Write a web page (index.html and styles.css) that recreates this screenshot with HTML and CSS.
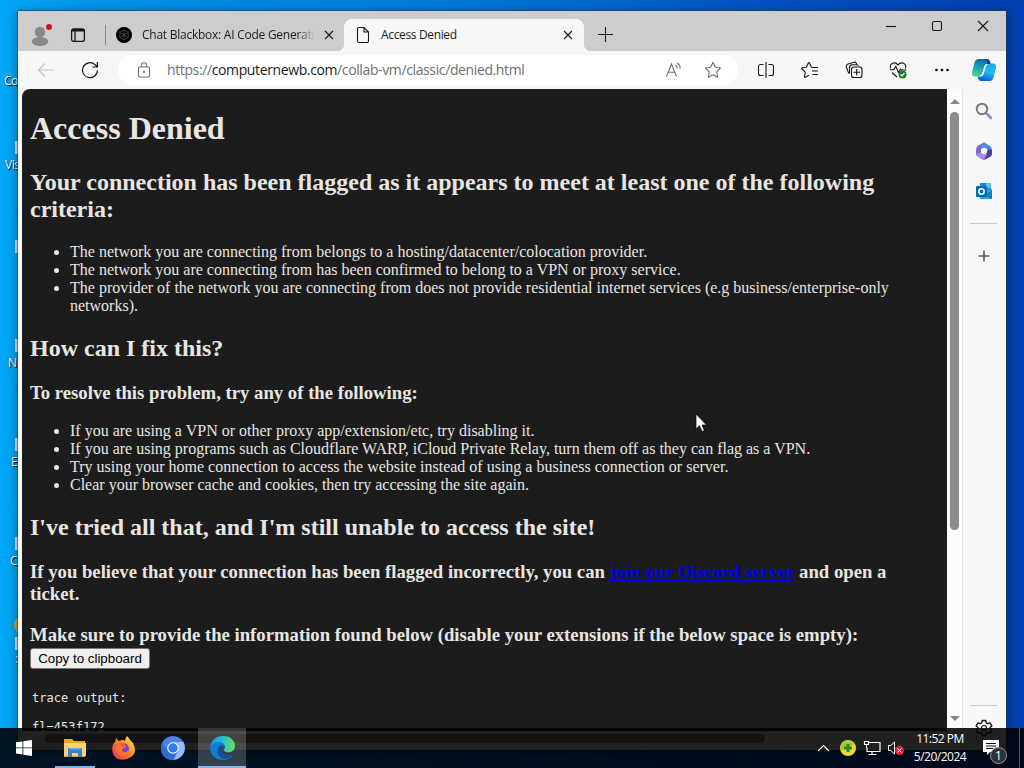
FILE: index.html
```html
<!DOCTYPE html>
<html lang="en">
<head>
<meta charset="utf-8">
<title>Access Denied</title>
<link rel="stylesheet" href="styles.css">
</head>
<body>
<div class="desktop">
  <div class="shortcut s1">Co</div>
  <div class="shortcut s2"><i></i>Vis</div>
  <div class="shortcut s3"><i></i></div>
  <div class="shortcut s4"><i></i>N</div>
  <div class="shortcut s5"><i></i>E</div>
  <div class="shortcut s6"><i></i>C</div>
  <div class="shortcut s7"><b></b><i></i>:</div>

  <main class="window">
    <header class="tabstrip">
      <svg class="avatar" width="24" height="28" viewBox="0 0 24 28"><circle cx="10" cy="11" r="5.2" fill="#888"/><ellipse cx="10" cy="20.5" rx="8.2" ry="4.5" fill="#888"/><circle cx="19" cy="6" r="3" fill="#d4141c"/></svg>
      <svg class="tabmenu line" width="16" height="16" viewBox="0 0 16 16"><rect x="1.6" y="1.8" width="12.8" height="12.5" rx="2" stroke-width="1.300"/><path d="M2 3.300h12" stroke-width="2.400"/><path d="M5 3v11" stroke-width="1.300"/></svg>
      <span class="divider"></span>
      <div class="tab back-tab">
        <svg width="16" height="16" viewBox="0 0 16 16"><circle cx="8" cy="8" r="8"/><path d="M8 3l4.300 2.500v5L8 13l-4.300-2.500v-5zM8 3v10M3.700 5.500l8.600 5M12.300 5.500l-8.600 5" fill="none" stroke="#555" stroke-width=".7"/></svg>
        <span class="tab-title long">Chat Blackbox: AI Code Generati</span>
        <svg class="close line" width="10" height="10" viewBox="0 0 10 10"><path d="M1 1l8 8M9 1l-8 8"/></svg>
      </div>
      <div class="tab active-tab">
        <svg class="line" width="14" height="18" viewBox="0 0 14 18"><path d="M3 1.500h5l4.500 4.500v9a1.500 1.500 0 0 1-1.500 1.500H3A1.500 1.500 0 0 1 1.500 15V3A1.500 1.500 0 0 1 3 1.500zM8 1.500V6h4.500"/></svg>
        <span class="tab-title short">Access Denied</span>
        <svg class="close line" width="10" height="10" viewBox="0 0 10 10"><path d="M1 1l8 8M9 1l-8 8"/></svg>
      </div>
      <svg class="newtab line" width="15" height="15" viewBox="0 0 15 15"><path d="M7.500 0v15M0 7.500h15"/></svg>
      <div class="controls">
        <svg class="line" width="12" height="12" viewBox="0 0 12 12"><path d="M1 6.500h10"/></svg>
        <svg class="line" width="12" height="12" viewBox="0 0 12 12"><rect x="1.500" y="1.500" width="9" height="9" rx="1.500"/></svg>
        <svg class="line" width="12" height="12" viewBox="0 0 12 12"><path d="M1 1l10 10M11 1L1 11"/></svg>
      </div>
    </header>

    <nav class="toolbar">
      <svg class="line back" width="18" height="16" viewBox="0 0 18 16"><path d="M17 8H1.500M8 1.500L1.500 8 8 14.500"/></svg>
      <svg class="line reload" width="18" height="18" viewBox="0 0 18 18"><path d="M16.500 9.500A7.500 7.500 0 1 1 14 3.600L16.300 6M16.400 1v5h-5" stroke-width="1.200"/></svg>
      <div class="address">
        <svg class="line gray" width="14" height="16" viewBox="0 0 14 16"><rect x="1.500" y="5" width="11" height="10" rx="1.500"/><path d="M4.300 5V3.500a2.700 2.700 0 0 1 5.400 0V5"/><circle cx="7" cy="10" r=".6"/></svg>
        <span class="url">https://<em>computernewb.com</em>/collab-vm/classic/denied.html</span>
        <svg class="line gray aloud" width="18" height="16" viewBox="0 0 18 16"><path d="M1.500 14.500L6.500 2l5 12.500M3.200 10.300h6.600M10.500 3a4 4 0 0 1 1.700 3.500M12.300 1A6.500 6.500 0 0 1 15.200 6.500"/></svg>
        <svg class="line gray" width="18" height="18" viewBox="0 0 18 18"><path d="M9 1.300l2.300 4.900 5.300.8-3.800 3.800.9 5.500L9 13.700l-4.700 2.600.9-5.500L1.400 7l5.300-.8z" stroke-linejoin="round"/></svg>
      </div>
      <div class="tools">
        <svg class="line" width="18" height="18" viewBox="0 0 18 18"><path d="M6.500 3.500H3.500a2 2 0 0 0-2 2v7a2 2 0 0 0 2 2h3M11.500 3.500h3a2 2 0 0 1 2 2v7a2 2 0 0 1-2 2h-3M9 1v16"/></svg>
        <svg class="line" width="18" height="18" viewBox="0 0 18 18"><path d="M10.500 6.200L8.500 2Q7.900 1 7.300 2L5.300 6.200 1.300 6.800Q.3 7.100 1 8l3.300 3.200-.8 4.500q0 1 1 .6L8 14.300M10.500 6.500H17M11 10h6M11.500 13.500H17" stroke-linejoin="round"/></svg>
        <svg class="line" width="18" height="18" viewBox="0 0 18 18"><rect x="6.500" y="6" width="10.500" height="10.500" rx="2.300"/><path d="M11.700 8v6.500M8.500 11.200H15M4.500 12.500Q3.600 12 3.200 11L1.200 5.500Q.9 4 2.500 3.300L9 1.200Q10.600.9 11.300 2.300L11.600 3.200M4.500 12.500V6.500Q4.700 4 7 3.700H11.500Q13 3.700 13.500 4.500"/></svg>
        <svg class="line" width="18" height="18" viewBox="0 0 18 18"><path d="M1.700 7.500C-.2 2.500 6-.2 9 4c3-4.200 9.200-1.500 7.300 3.500M.8 8.800h4l2-3.500L9.500 11.500l2-3.300 1 .8h5M3 11.500L8 16"/><circle cx="13.500" cy="13.500" r="4" fill="#247a2e" stroke="none"/><path d="M11.600 13.500l1.400 1.400 2.500-2.800" stroke="#fff"/></svg>
        <svg width="18" height="18" viewBox="0 0 18 18"><circle cx="3.500" cy="9" r="1.300"/><circle cx="9" cy="9" r="1.300"/><circle cx="14.500" cy="9" r="1.300"/></svg>
      </div>
      <svg class="copilot" width="26" height="24" viewBox="0 0 26 24"><defs><linearGradient id="cg" x1=".6" y1="0" x2=".3" y2="1"><stop offset="0" stop-color="#155fa5"/><stop offset=".45" stop-color="#1b9bbd"/><stop offset="1" stop-color="#4ed596"/></linearGradient><linearGradient id="cb" x1=".7" y1="0" x2=".4" y2="1"><stop offset="0" stop-color="#25a9e8"/><stop offset=".5" stop-color="#1dbaf2"/><stop offset="1" stop-color="#0b5fd0"/></linearGradient></defs><path d="M7.500 1H16q2.300 0 3 3l.5 2H16q-2 0-2.700 2.500L11.500 15q-1 3.500-4 3.500H3.800Q.5 18.500 1 14.500L3.500 4.500Q4.500 1 7.500 1z" fill="url(#cg)"/><path d="M18.500 23H10q-2.300 0-3-3l-.5-1.500H9q2.500 0 3.300-2.800L14.500 9q1-3.500 4-3.500h3.700q3.300 0 2.800 4L22.500 19.500Q21.500 23 18.500 23z" fill="url(#cb)"/><path d="M15.500 1H16q2.300 0 3 3l.5 2-3.500-.1z" fill="#12438c"/><path d="M13.300 8.500Q14 6.300 16 6h1.500q-2 .7-2.800 3L12.500 16q-.8 2.300-2.500 2.500H8q2.500-.5 3.500-3.500z" fill="#f4fcff"/></svg>
    </nav>

    <div class="content">
      <div class="viewport">
        <article class="page">
          <h1>Access Denied</h1>
          <h2>Your connection has been flagged as it appears to meet at least one of the following criteria:</h2>
          <ul>
            <li>The network you are connecting from belongs to a hosting/datacenter/colocation provider.</li>
            <li>The network you are connecting from has been confirmed to belong to a VPN or proxy service.</li>
            <li>The provider of the network you are connecting from does not provide residential internet services (e.g business/enterprise-only networks).</li>
          </ul>
          <h2>How can I fix this?</h2>
          <h3>To resolve this problem, try any of the following:</h3>
          <ul>
            <li>If you are using a VPN or other proxy app/extension/etc, try disabling it.</li>
            <li>If you are using programs such as Cloudflare WARP, iCloud Private Relay, turn them off as they can flag as a VPN.</li>
            <li>Try using your home connection to access the website instead of using a business connection or server.</li>
            <li>Clear your browser cache and cookies, then try accessing the site again.</li>
          </ul>
          <h2>I've tried all that, and I'm still unable to access the site!</h2>
          <h3>If you believe that your connection has been flagged incorrectly, you can <a href="#">join our Discord server</a> and open a ticket.</h3>
          <h3 class="provide">Make sure to provide the information found below (disable your extensions if the below space is empty):</h3>
          <button class="copy">Copy to clipboard</button>
          <pre class="trace">trace output:

fl=453f172</pre>
        </article>
        <div class="hscroll"><span></span></div>
      </div>
      <div class="vscroll"><i class="up"></i><span></span><i class="down"></i></div>
      <aside class="sidebar">
        <svg width="18" height="18" viewBox="0 0 18 18"><circle cx="7" cy="7" r="5.300" fill="#eef2f5" stroke="#777" stroke-width="1.900"/><path d="M11 11l2 2" stroke="#777" stroke-width="2"/><path d="M12.800 12.800l3 3" stroke="#a583cb" stroke-width="3" stroke-linecap="round"/></svg>
        <svg width="18" height="18" viewBox="0 0 18 18"><path d="M9 .5L3 3.500Q1 5 1 8v5l5-2V7l6-4.500z" fill="#7d6bd0"/><path d="M9 .5l6 3.500q2 1 2 4v3l-5-4-5-.5-1 .5 1-4z" fill="#4a8ee0"/><path d="M17 8v4q0 2-2 3l-6 3-4-2 6-4 2-5z" fill="#503c9c"/><path d="M1 12l5-1.500 6 1.500-3 6-6-3q-2-1-2-3z" fill="#a68ae0"/><path d="M9 5.500l3 1.700v3.500l-3 1.700-3-1.700V7.200z" fill="#fff"/></svg>
        <svg width="18" height="18" viewBox="0 0 18 18"><rect x="5" y="1" width="11" height="10" fill="#168bd7"/><path d="M11 1h5v5h-5z" fill="#49c8f2"/><path d="M4 9l13-2v9q0 1-1 1H5z" fill="#27a5e7"/><path d="M17 8v8q0 1-1 1l-6-4z" fill="#147bc5"/><rect x="1" y="4" width="11" height="11" rx="1" fill="#0868b8"/><circle cx="6.500" cy="9.500" r="2.700" fill="none" stroke="#fff" stroke-width="1.500"/></svg>
        <hr>
        <svg class="line plus" width="12" height="12" viewBox="0 0 12 12"><path d="M6 .5v11M.5 6h11"/></svg>
        <hr class="low">
        <svg class="line gear" width="18" height="18" viewBox="0 0 18 18"><path d="M7.300 1.500h3.400l.6 2.300 1.500.8 2.300-.7 1.700 3-1.700 1.600v1l1.700 1.600-1.700 3-2.300-.7-1.500.8-.6 2.300H7.300l-.6-2.300-1.500-.8-2.300.7-1.700-3 1.700-1.600v-1L1.200 6.900l1.700-3 2.300.7 1.500-.8z" stroke-width="1.400" stroke-linejoin="round"/><circle cx="9" cy="9" r="2.500"/></svg>
      </aside>
    </div>
  </main>

  <svg class="cursor" width="13" height="20" viewBox="0 0 13 20"><path d="M1 1v15l3.500-3.300L7 18.500l2.300-1L7 12h4.500z" fill="#fff" stroke="#000" stroke-width=".7"/></svg>

  <footer class="taskbar">
    <div class="app"><svg width="16" height="16" viewBox="0 0 16 16" fill="#fff"><path d="M0 2.300L6.500 1.400v6.100H0zM7.300 1.300L16 0v7.500H7.300zM0 8.300h6.500v6.200L0 13.600zM7.300 8.300H16V16l-8.700-1.300z"/></svg></div>
    <div class="app open"><svg width="22" height="20" viewBox="0 0 22 20"><path d="M0 1h8l2 2h11v16H0z" fill="#e5a629"/><path d="M0 5h22v13H0z" fill="#f8d56c"/><path d="M4 10h14v9h-4v-4H8v4H4z" fill="#3284c4"/><path d="M5 10h12v1.500H5z" fill="#58b7ed"/></svg></div>
    <div class="app"><svg width="24" height="24" viewBox="0 0 24 24"><defs><linearGradient id="fx" x1="1" y1="0" x2="0" y2="1"><stop offset="0" stop-color="#fff44a"/><stop offset=".45" stop-color="#ff8b20"/><stop offset="1" stop-color="#f32460"/></linearGradient></defs><path d="M15 0c2 2 3 4 4 5l2 2q6 12-6 16Q3 26 .5 16-.5 9 3 6l1-4 3 3 3-1q2 0 3 1 0-3 2-5z" fill="url(#fx)"/><circle cx="12" cy="12.500" r="5" fill="#7843cf"/><path d="M4 8l7 1q3 0 3 2-4 1-4 4 3 3 7-1-1 6-7 6Q5 19 4 14z" fill="#ff7433"/><path d="M8 7h4l2 3-4 1z" fill="#ff5a40"/></svg></div>
    <div class="app"><svg width="24" height="24" viewBox="0 0 24 24"><circle cx="12" cy="12" r="12" fill="#4a82ec"/><path d="M1 7l6 8q5 5 10-2l-5 11Q3 24 .5 16q-1-5 .5-9z" fill="#326bd0"/><path d="M12 6h10.500q5 13-9.500 18l4-9q2-5-5-9z" fill="#9dbbf7"/><circle cx="12" cy="12" r="5.800" fill="#fff"/><circle cx="12" cy="12" r="4.700" fill="#337be5"/></svg></div>
    <div class="app open current"><svg width="25" height="24" viewBox="0 0 25 24"><defs><linearGradient id="eg" x2="1"><stop stop-color="#1495d8"/><stop offset=".5" stop-color="#25bfd0"/><stop offset="1" stop-color="#71df54"/></linearGradient></defs><path d="M0 12C1 3 7 0 13 0c8 0 12 5 12 10 0 6-7 8-11 5-1-1 1-2 1-4 0-4-10-6-15 1z" fill="url(#eg)"/><path d="M0 12C3 5 13 4 15 10 8 8 5 18 13 21q5 2 10-2-3 5-10 5Q1 23 0 12z" fill="#127bd0"/><path d="M13 9c-7 0-8 12 1 14 4 0 7-2 9-5-8 3-13-1-10-9z" fill="#174f9d"/></svg></div>
    <div class="tray">
      <svg class="chev" width="13" height="8" viewBox="0 0 13 8"><path d="M1 7l5.500-5.500L12 7"/></svg>
      <svg width="16" height="16" viewBox="0 0 16 16"><circle cx="8" cy="8" r="8" fill="#e8dc3c"/><path d="M1 4Q8-3 14 4L1 11z" fill="#9ccd38"/><path d="M8 4v8M4 8h8" stroke="#2b8b20" stroke-width="3"/></svg>
      <svg class="net" width="18" height="16" viewBox="0 0 18 16"><path d="M5.500 2.500H17v9H4v-4M9 12v2.500M5.500 14.500h8M1.500 1.500h4v3h-4zM3.500 5v3"/></svg>
      <svg class="speaker" width="18" height="16" viewBox="0 0 18 16"><path d="M1.500 5.500h2.300L7.500 2v12l-3.700-3.500H1.500z" fill="none" stroke="#fff"/><circle cx="12.500" cy="10.500" r="4.500" fill="#d82b32"/><path d="M10.500 8.500l4 4M14.500 8.500l-4 4" stroke="#fff"/></svg>
      <div class="clock"><span>11:52 PM</span><span>5/20/2024</span></div>
      <div class="notice"><svg width="16" height="16" viewBox="0 0 16 16"><path d="M0 0h16v12H7l-3 3v-3H0z" fill="#fff"/><path d="M3 3.500h10M3 6h10M3 8.500h7" stroke="#111"/></svg><b>1</b></div>
      <span class="peek"></span>
    </div>
  </footer>
</div>
</body>
</html>
```
FILE: styles.css
```css
* { box-sizing: border-box; }
body { margin: 0; font-family: "Open Sans", "Noto Sans", sans-serif; }
svg { display: block; flex: none; }
.line { fill: none; stroke: #171717; stroke-width: 1.1; }
.gray { stroke: #707070; }

.desktop { position: relative; width: 1024px; height: 768px; overflow: hidden; background: linear-gradient(90deg, #00a6f7 0, #0093e7 10%, #0078d7 45%, #0052c0 75%, #003faf 100%); }
.shortcut { position: absolute; left: 0; width: 18px; height: 34px; overflow: hidden; font-size: 12px; line-height: 16px; color: #fff; text-shadow: 1px 1px 1px #000; white-space: nowrap; letter-spacing: -.5px; }
.shortcut i { position: absolute; left: 15px; top: 0; width: 3px; height: 13px; background: #d5e4ef; }
.s1 { top: 73px; padding-left: 4px; }
.s2 { top: 141px; padding: 16px 0 0 5px; }
.s3 { top: 240px; }
.s4 { top: 339px; padding: 16px 0 0 8px; }
.s5 { top: 438px; padding: 16px 0 0 11px; }
.s6 { top: 537px; padding: 16px 0 0 10px; }
.s7 { top: 615px; height: 52px; padding: 36px 0 0 15px; }
.s7 i { top: 22px; }
.s7 b { position: absolute; left: 14px; top: 0; width: 20px; height: 20px; border-radius: 50%; background: #c8a842; }

.window { position: absolute; left: 18px; top: 11px; width: 988px; height: 739px; display: flex; flex-direction: column; background: #f7f7f7; box-shadow: 0 0 0 1px rgba(40, 60, 80, .55), 0 2px 10px rgba(0, 0, 0, .45); }
.tabstrip { height: 40px; flex: none; display: flex; align-items: center; background: #cdcdcd; }
.avatar { margin: 8px 0 0 12px; }
.tabmenu { margin: 8px 0 0 16px; }
.divider { width: 1px; height: 20px; margin: 8px 0 0 19px; background: #888; }
.tab { display: flex; align-items: center; font-size: 12px; color: #1b1b1b; }
.back-tab { width: 238px; height: 32px; margin-top: 8px; padding-left: 10px; }
.tab-title { flex: none; white-space: nowrap; overflow: hidden; line-height: 18px; }
.long { width: 173px; margin-left: 10px; letter-spacing: -.25px; -webkit-mask-image: linear-gradient(90deg, #000 90%, transparent); mask-image: linear-gradient(90deg, #000 90%, transparent); }
.back-tab .close { margin-left: 9px; }
.active-tab { position: relative; width: 240px; height: 32px; margin-top: 8px; padding: 0 11px 0 12px; border-radius: 8px 8px 0 0; background: #f7f7f7; }
.active-tab::before, .active-tab::after { content: ""; position: absolute; bottom: 0; width: 7px; height: 7px; }
.active-tab::before { left: -7px; background: radial-gradient(circle at 0 0, transparent 7px, #f7f7f7 7.5px); }
.active-tab::after { right: -7px; background: radial-gradient(circle at 100% 0, transparent 7px, #f7f7f7 7.5px); }
.short { margin: 0 auto 0 11px; letter-spacing: -.35px; }
.newtab { margin: 7px 0 0 14px; }
.controls { display: flex; gap: 34px; margin: 0 17px 10px auto; }

.toolbar { height: 38px; flex: none; display: flex; align-items: center; }
.back { margin-left: 19px; stroke: #c5c5c5; }
.reload { margin-left: 26px; }
.address { width: 620px; height: 30px; margin-left: 19px; padding: 0 16px 0 19px; display: flex; align-items: center; border-radius: 15px; background: #fff; }
.url { margin-left: 16px; font-size: 14px; line-height: 20px; letter-spacing: -.38px; white-space: nowrap; color: #707070; }
.url em { font-style: normal; color: #1b1b1b; }
.aloud { margin: 0 21px 0 auto; }
.tools { display: flex; gap: 26px; margin-left: 19px; }
.copilot { margin: 0 9px 0 auto; }

.content { flex: 1; min-height: 0; display: flex; padding-left: 4px; }
.viewport { width: 925px; display: flex; flex-direction: column; }
.page { height: 642px; flex: none; overflow: hidden; padding: 0 8px; border-radius: 8px 0 0 0; background: #1c1c1c; color: #e8e6e3; font-family: "Liberation Serif", serif; font-size: 16px; line-height: normal; }
.page h1 { margin: 21.44px 0; font-size: 32px; }
.page h2 { margin: 19.92px 0; font-size: 24px; }
.page h3 { margin: 18.72px 0; font-size: 18.72px; }
.page ul { margin: 16px 0; padding-left: 40px; }
.page .provide { margin-bottom: 2px; }
.page a { color: #0000ee; text-decoration: underline; text-decoration-thickness: 2px; text-decoration-skip-ink: none; }
.copy { display: block; width: 120px; height: 21px; padding: 1px 0 0; border: 1px solid #777; border-radius: 3px; background: #efefef; color: #000; font-family: "Liberation Sans", sans-serif; font-size: 13.333px; line-height: 18px; }
.trace { margin: 22px 0 0 2px; font: 12px/14.5px "DejaVu Sans Mono", monospace; letter-spacing: .05px; }
.hscroll { height: 15px; padding: 3px 0 3px 23px; background: #fcfcfc; }
.hscroll span { display: block; width: 720px; height: 9px; border-radius: 5px; background: #8b8b8b; }
.vscroll { width: 15px; height: 642px; display: flex; flex-direction: column; align-items: center; padding-top: 10px; background: #fcfcfc; }
.vscroll span { width: 9px; height: 418px; margin-top: 8px; border-radius: 5px; background: #8b8b8b; }
.vscroll i { border: 5px solid transparent; border-top-width: 0; border-bottom: 5px solid #858585; }
.vscroll .down { margin: auto 0 10px; border-bottom-width: 0; border-top: 5px solid #858585; }
.sidebar { width: 44px; display: flex; flex-direction: column; align-items: center; gap: 22px; padding: 13px 2px 0 0; border-left: 1px solid #e4e4e4; }
.sidebar hr { width: 27px; height: 1px; margin: 1px 0 0; border: 0; background: #ccc; }
.sidebar .plus { margin-top: 4px; }
.sidebar .low { margin-top: auto; }
.sidebar .gear { margin: -9px 0 13px; }

.cursor { position: absolute; left: 695px; top: 413px; }
.taskbar { position: absolute; left: 0; bottom: 0; width: 1024px; height: 40px; display: flex; background: linear-gradient(rgba(0, 0, 0, .87), rgba(0, 3, 10, .89)); }
.app { width: 49px; height: 40px; display: flex; align-items: center; justify-content: center; }
.app:first-child { width: 50px; padding-right: 2px; }
.open { border-bottom: 2px solid #80b5ef; padding-top: 2px; }
.app.open:not(.current) { width: 40px; margin: 0 4px 0 5px; }
.current { width: 48px; background: rgba(255, 255, 255, .2); margin-left: 1px; }
.tray { display: flex; align-items: center; margin-left: auto; color: #fff; }
.chev, .net { fill: none; stroke: #fff; stroke-width: 1.2; }
.chev { margin-right: 10px; }
.net { margin-left: 7px; }
.speaker { margin-left: 6px; }
.clock { width: 56px; margin-left: 7px; display: flex; flex-direction: column; align-items: center; font-size: 12px; line-height: 18px; letter-spacing: -.5px; white-space: nowrap; }
.notice { position: relative; margin-left: 15px; }
.notice b { position: absolute; left: 7px; top: 7px; width: 17px; height: 17px; border: 1px solid #999; border-radius: 50%; background: #30343a; font-size: 12px; font-weight: 400; line-height: 15px; text-align: center; }
.peek { width: 1px; height: 40px; margin: 0 4px 0 20px; background: #555; }
```
